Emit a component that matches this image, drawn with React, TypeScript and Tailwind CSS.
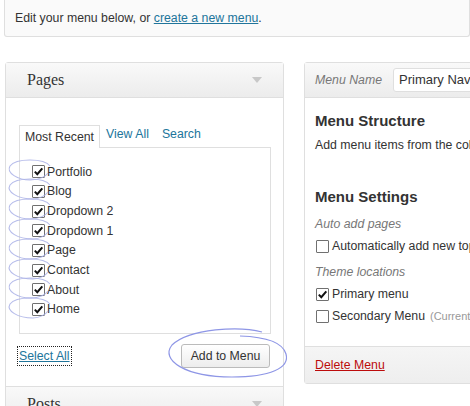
import type { ReactNode } from 'react';

const pages = ['Portfolio', 'Blog', 'Dropdown 2', 'Dropdown 1', 'Page', 'Contact', 'About', 'Home'];

function Check({ checked }: { checked?: boolean }) {
  return (
    <span className="w-[13px] h-[13px] shrink-0 border border-[#707070] bg-white rounded-[1px] flex items-center justify-center">
      {checked && (
        <svg viewBox="0 0 11 11" className="w-[11px] h-[11px]">
          <path d="M1.8 5.6 L4.3 8.2 L9.3 2.4" fill="none" stroke="#111" strokeWidth={2} />
        </svg>
      )}
    </span>
  );
}

function Chevron() {
  return (
    <svg viewBox="0 0 10 6" className="w-[10px] h-[6px]">
      <path d="M0 0 H10 L5 6 Z" fill="#c8c8c8" />
    </svg>
  );
}

function BoxHeader({ children }: { children: ReactNode }) {
  return (
    <div className="h-[35px] flex items-center justify-between pl-[21px] pr-[21px] bg-gradient-to-b from-[#f9f9f9] to-[#ececec] border-b border-[#dfdfdf]">
      <span className="font-['Liberation_Serif',serif] text-[16px] text-[#333]">{children}</span>
      <Chevron />
    </div>
  );
}

export default function App() {
  return (
    <div className="relative w-[470px] h-[406px] overflow-hidden bg-white font-['Liberation_Sans',Arial,sans-serif] text-[12.3px] text-[#333]">
      {/* Notice */}
      <div className="ml-[4px] h-[37px] border-x border-b border-[#dfdfdf] rounded-b-[3px] bg-[#fafafa] flex items-center pl-[10px] whitespace-nowrap">
        Edit your menu below, or&nbsp;
        <a href="#" className="text-[#21759b] underline">create a new menu</a>.
      </div>

      <div className="flex mt-[25px] gap-[20px]">
        {/* Left column */}
        <div className="ml-[5px] w-[279px] shrink-0 border border-[#dfdfdf] rounded-t-[3px] bg-white">
          <BoxHeader>Pages</BoxHeader>
          <div className="pt-[26px] pl-[13px] pr-[12px]">
            <div className="flex items-end h-[23px]">
              <span className="h-[23px] px-[5px] flex items-center border-x border-t border-[#dfdfdf] bg-white relative -mb-px z-10">Most Recent</span>
              <a href="#" className="ml-[6px] mb-[4px] text-[#21759b]">View All</a>
              <a href="#" className="ml-[13px] mb-[4px] text-[#21759b]">Search</a>
            </div>
            <div className="h-[187px] border border-[#dfdfdf] pt-[14px] pl-[12px] relative">
              {pages.map((p) => (
                <div key={p} className="h-[19.7px] flex items-center gap-[2px]">
                  <Check checked />
                  <span>{p}</span>
                </div>
              ))}
            </div>
            <div className="flex items-center justify-between mt-[10px] h-[24px] pr-[1px]">
              <a href="#" className="text-[#21759b] underline outline-1 outline-dotted outline-[#222] -ml-[1px] px-px">Select All</a>
              <button className="h-[24px] w-[89px] rounded-[3px] border border-[#bbb] bg-gradient-to-b from-white to-[#ededed] text-[12.3px] text-[#333]">
                Add to Menu
              </button>
            </div>
          </div>
          <div className="h-[18px]" />
          <div className="border-t border-[#dfdfdf]">
            <BoxHeader>Posts</BoxHeader>
          </div>
        </div>

        {/* Right column */}
        <div className="w-[300px] shrink-0 h-[322px] border border-[#dfdfdf] rounded-[3px] bg-white flex flex-col">
          <div className="h-[35px] flex items-center pl-[10px] bg-gradient-to-b from-[#f9f9f9] to-[#ececec] border-b border-[#dfdfdf]">
            <span className="italic text-[#777] w-[78px]">Menu Name</span>
            <span className="h-[24px] w-[200px] bg-white border border-[#dfdfdf] rounded-[3px] flex items-center pl-[5px] text-[13px] text-[#333] whitespace-nowrap">
              Primary Navigation
            </span>
          </div>
          <div className="flex-1 pl-[10px] pt-[13px] whitespace-nowrap">
            <div className="text-[15px] font-bold h-[20px] flex items-center">Menu Structure</div>
            <div className="mt-[7px] h-[15px] flex items-center">Add menu items from the column on the left.</div>
            <div className="mt-[34px] text-[15px] font-bold h-[20px] flex items-center">Menu Settings</div>
            <div className="mt-[10px] h-[15px] flex items-center italic text-[#777]">Auto add pages</div>
            <div className="mt-[6px] h-[16px] flex items-center gap-[3px] pl-px">
              <Check />
              <span>Automatically add new top-level pages</span>
            </div>
            <div className="mt-[11px] h-[15px] flex items-center italic text-[#777]">Theme locations</div>
            <div className="mt-[6px] h-[16px] flex items-center gap-[3px] pl-px">
              <Check checked />
              <span>Primary menu</span>
            </div>
            <div className="mt-[6px] h-[16px] flex items-center gap-[3px] pl-px">
              <Check />
              <span>Secondary Menu</span>
              <span className="text-[11px] text-[#999] ml-[2px]">(Currently set to: Footer)</span>
            </div>
          </div>
          <div className="h-[37px] border-t border-[#dfdfdf] bg-gradient-to-b from-[#f5f5f5] to-[#eeeeee] flex items-center pl-[10px]">
            <a href="#" className="text-[#bc0b0b] underline">Delete Menu</a>
          </div>
        </div>
      </div>

      {/* Annotation loops */}
      <svg className="absolute inset-0 pointer-events-none" width="470" height="406" viewBox="0 0 470 406">
        {[170, 189, 209, 229, 249, 269, 288, 308].map((y, i) => (
          <path
            key={y}
            d={`M50 ${y - 4} C44 ${y - 12} 16 ${y - 12} 10 ${y - 4} C6 ${y + 3} 18 ${y + 10} ${30 + (i % 2) * 3} ${y + 10} C40 ${y + 10} 46 ${y + 6} 48 ${y + 3}`}
            fill="none"
            stroke="#a9b0e6"
            strokeWidth={1.1}
            opacity={0.85}
          />
        ))}
        <path
          d="M262 332 C240 326 190 328 172 345 C160 360 185 377 232 377 C270 377 290 368 286 354 C283 343 268 337 240 336"
          fill="none"
          stroke="#8e96e6"
          strokeWidth={1.2}
        />
      </svg>
    </div>
  );
}
